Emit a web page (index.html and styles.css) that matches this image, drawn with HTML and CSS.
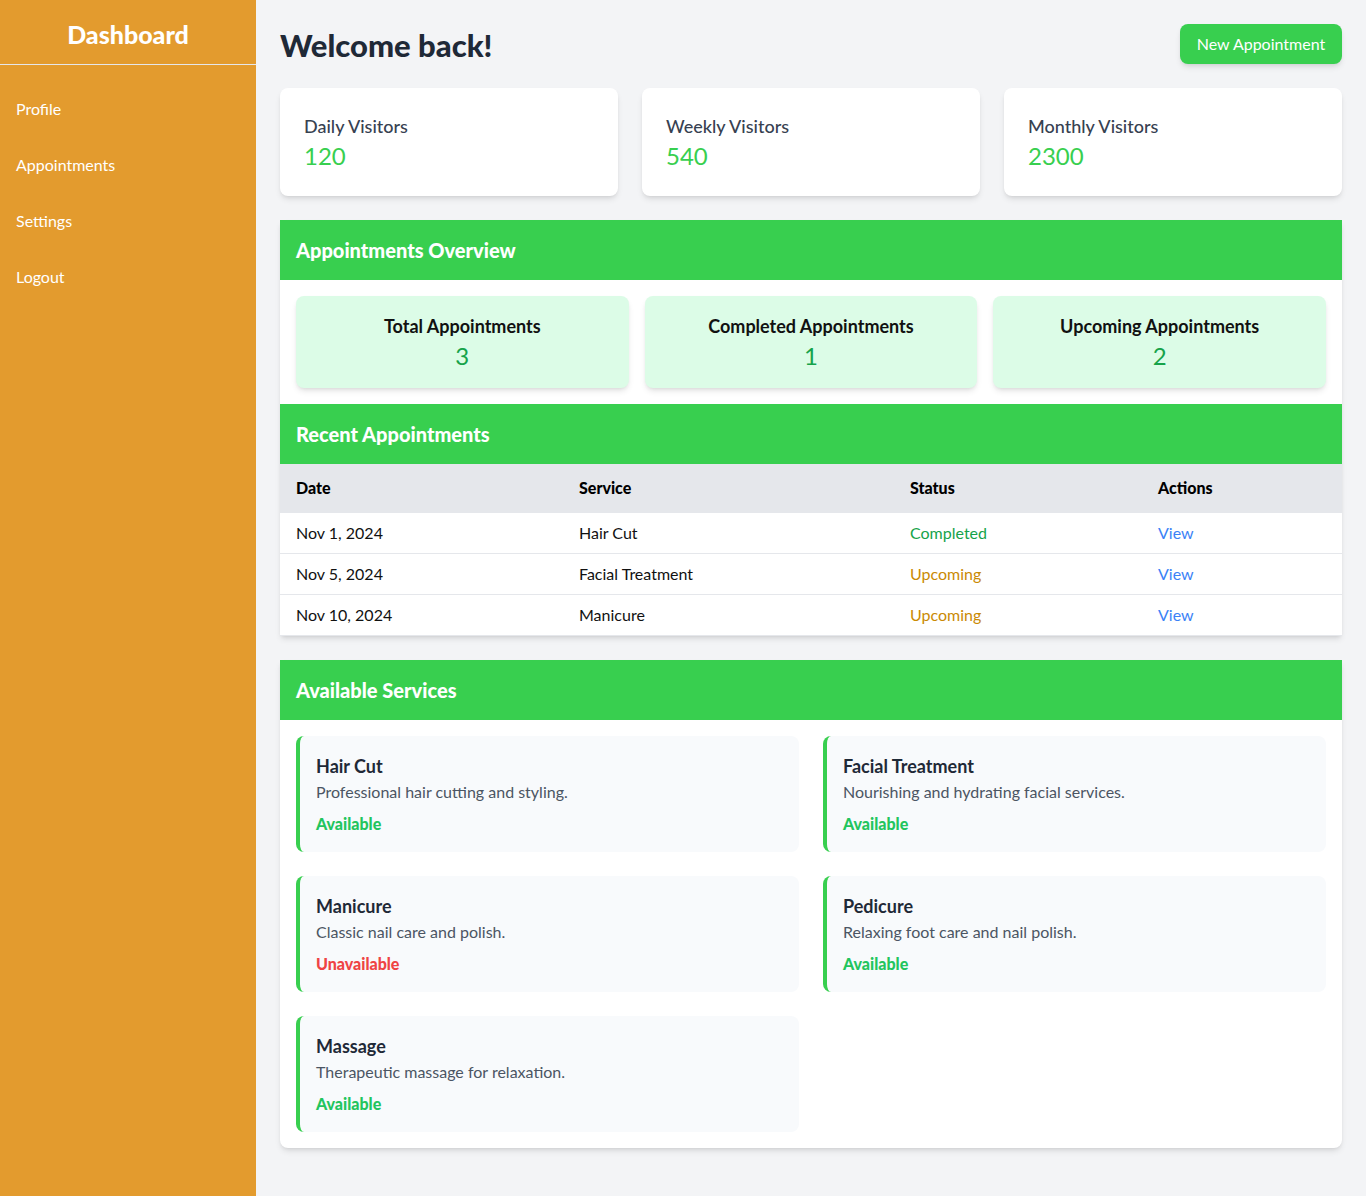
FILE: index.html
```html
<!DOCTYPE html>
<html lang="en">
<head>
<meta charset="utf-8">
<title>Dashboard</title>
<link rel="stylesheet" href="styles.css">
</head>
<body>
<div class="layout">
  <aside class="sidebar">
    <div class="brand">Dashboard</div>
    <nav class="nav">
      <a class="nav-item" href="#">Profile</a>
      <a class="nav-item" href="#">Appointments</a>
      <a class="nav-item" href="#">Settings</a>
      <a class="nav-item" href="#">Logout</a>
    </nav>
  </aside>
  <main class="main">
    <div class="topbar">
      <h1 class="title">Welcome back!</h1>
      <button class="btn">New Appointment</button>
    </div>

    <div class="stats">
      <div class="stat-card"><div class="stat-label">Daily Visitors</div><div class="stat-value">120</div></div>
      <div class="stat-card"><div class="stat-label">Weekly Visitors</div><div class="stat-value">540</div></div>
      <div class="stat-card"><div class="stat-label">Monthly Visitors</div><div class="stat-value">2300</div></div>
    </div>

    <section class="panel">
      <div class="panel-head">Appointments Overview</div>
      <div class="overview">
        <div class="ov-box"><div class="ov-label">Total Appointments</div><div class="ov-value">3</div></div>
        <div class="ov-box"><div class="ov-label">Completed Appointments</div><div class="ov-value">1</div></div>
        <div class="ov-box"><div class="ov-label">Upcoming Appointments</div><div class="ov-value">2</div></div>
      </div>
      <div class="panel-head">Recent Appointments</div>
      <table class="table">
        <thead>
          <tr><th class="c-date">Date</th><th class="c-service">Service</th><th class="c-status">Status</th><th class="c-actions">Actions</th></tr>
        </thead>
        <tbody>
          <tr><td>Nov 1, 2024</td><td>Hair Cut</td><td class="st-done">Completed</td><td><a class="link" href="#">View</a></td></tr>
          <tr><td>Nov 5, 2024</td><td>Facial Treatment</td><td class="st-up">Upcoming</td><td><a class="link" href="#">View</a></td></tr>
          <tr><td>Nov 10, 2024</td><td>Manicure</td><td class="st-up">Upcoming</td><td><a class="link" href="#">View</a></td></tr>
        </tbody>
      </table>
    </section>

    <section class="panel services-panel">
      <div class="panel-head">Available Services</div>
      <div class="services">
        <div class="svc"><div class="svc-name">Hair Cut</div><div class="svc-desc">Professional hair cutting and styling.</div><div class="svc-status ok">Available</div></div>
        <div class="svc"><div class="svc-name">Facial Treatment</div><div class="svc-desc">Nourishing and hydrating facial services.</div><div class="svc-status ok">Available</div></div>
        <div class="svc"><div class="svc-name">Manicure</div><div class="svc-desc">Classic nail care and polish.</div><div class="svc-status no">Unavailable</div></div>
        <div class="svc"><div class="svc-name">Pedicure</div><div class="svc-desc">Relaxing foot care and nail polish.</div><div class="svc-status ok">Available</div></div>
        <div class="svc"><div class="svc-name">Massage</div><div class="svc-desc">Therapeutic massage for relaxation.</div><div class="svc-status ok">Available</div></div>
      </div>
    </section>
  </main>
</div>
</body>
</html>
```

FILE: styles.css
```css
* { box-sizing: border-box; }
html, body { margin: 0; padding: 0; }
body {
  font-family: "Lato", "Open Sans", "Liberation Sans", sans-serif;
  font-size: 16px;
  line-height: 24px;
  color: #111827;
  background: #f3f4f6;
}
.layout { display: flex; min-height: 100vh; }
.sidebar {
  width: 256px;
  flex-shrink: 0;
  background: #e39b2e;
  color: #fff;
}
.brand {
  height: 65px;
  padding: 18px 16px 14px;
  text-align: center;
  font-size: 25px;
  line-height: 32px;
  font-weight: 900;
  border-bottom: 1px solid #e5e7eb;
}
.nav { padding-top: 16px; display: flex; flex-direction: column; }
.nav-item {
  display: block;
  padding: 16px;
  color: #fff;
  text-decoration: none;
  font-size: 16px;
  line-height: 24px;
}
.main { flex: 1; padding: 24px; min-width: 0; }
.topbar {
  display: flex;
  justify-content: space-between;
  align-items: center;
  margin-bottom: 24px;
  height: 40px;
}
.title {
  margin: 0;
  padding-top: 2px;
  font-size: 31px;
  line-height: 36px;
  font-weight: 900;
  color: #1f2937;
}
.btn {
  font-family: inherit;
  font-size: 16px;
  line-height: 24px;
  color: #fff;
  background: #38cf4f;
  border: 0;
  border-radius: 8px;
  padding: 8px 16px;
  width: 162px;
  box-shadow: 0 4px 6px -1px rgba(0,0,0,.1), 0 2px 4px -2px rgba(0,0,0,.1);
}
.stats {
  display: grid;
  grid-template-columns: repeat(3, 1fr);
  gap: 24px;
  margin-bottom: 24px;
}
.stat-card {
  background: #fff;
  border-radius: 8px;
  padding: 24px;
  box-shadow: 0 4px 6px -1px rgba(0,0,0,.1), 0 2px 4px -2px rgba(0,0,0,.1);
}
.stat-label { font-size: 18px; line-height: 28px; color: #374151; font-weight: 500; }
.stat-value { font-size: 24px; line-height: 32px; color: #38cf4f; }
.panel {
  background: #fff;
  margin-bottom: 24px;
  box-shadow: 0 4px 6px -1px rgba(0,0,0,.1), 0 2px 4px -2px rgba(0,0,0,.1);
}
.panel-head {
  background: #38cf4f;
  color: #fff;
  font-size: 20px;
  line-height: 28px;
  font-weight: 900;
  padding: 16px;
}
.overview {
  display: grid;
  grid-template-columns: repeat(3, 1fr);
  gap: 16px;
  padding: 16px;
}
.ov-box {
  background: #dcfce7;
  border-radius: 8px;
  padding: 16px;
  text-align: center;
  box-shadow: 0 4px 6px -1px rgba(0,0,0,.1), 0 2px 4px -2px rgba(0,0,0,.1);
}
.ov-label { font-size: 18px; line-height: 28px; font-weight: 700; color: #111; }
.ov-value { font-size: 24px; line-height: 32px; color: #16a34a; }
.table { width: 100%; border-collapse: collapse; }
.table th {
  background: #e5e7eb;
  text-align: left;
  font-weight: 900;
  padding: 12px 16px 13px;
  color: #000;
}
.table td {
  padding: 8px 16px;
  border-bottom: 1px solid #e5e7eb;
  color: #111;
}
.c-date { width: 283px; }
.c-service { width: 331px; }
.c-status { width: 248px; }
.st-done { color: #16a34a !important; }
.st-up { color: #ca8a04 !important; }
.link { color: #3b82f6; text-decoration: none; }
.services-panel { border-radius: 0 0 8px 8px; }
.services {
  display: grid;
  grid-template-columns: 1fr 1fr;
  gap: 24px;
  padding: 16px;
}
.svc {
  background: #f8fafc;
  border-left: 4px solid #38cf4f;
  border-radius: 8px;
  padding: 16px;
}
.svc-name { font-size: 18px; line-height: 28px; font-weight: 700; color: #1f2937; }
.svc-desc { color: #4b5563; }
.svc-status { margin-top: 8px; font-weight: 900; }
.ok { color: #22c55e; }
.no { color: #ef4444; }
```
